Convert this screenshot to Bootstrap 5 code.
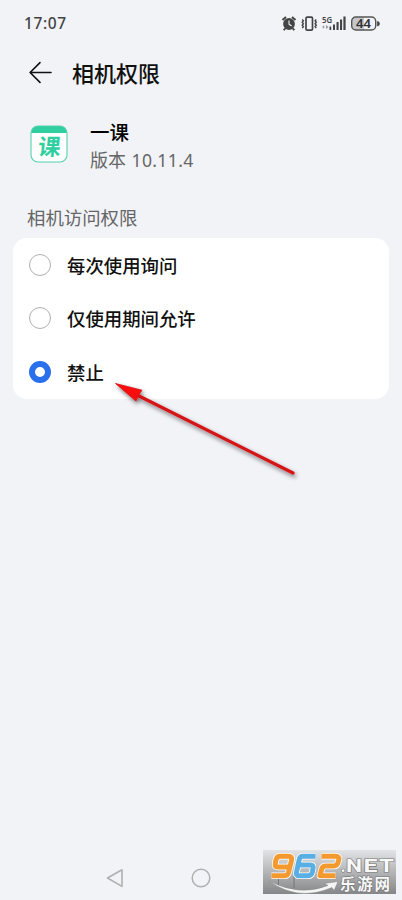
<!DOCTYPE html>
<html lang="zh-CN">
<head>
<meta charset="utf-8">
<meta name="viewport" content="width=device-width, initial-scale=1">
<title>相机权限</title>
<link href="https://cdn.jsdelivr.net/npm/bootstrap@5.3.0/dist/css/bootstrap.min.css" rel="stylesheet">
<style>
body{background:#f1f3f7;font-family:Roboto,"Noto Sans CJK SC",sans-serif;color:#111}
.screen{width:402px;height:900px;overflow:hidden}
.statusbar{height:47px;padding:0 22px 0 24px;color:#444}
.clock{font-family:"Noto Sans",sans-serif;font-size:15.5px;font-weight:500;line-height:47px;letter-spacing:.6px}
.topbar{height:53px;padding-left:28px}
.topbar svg{margin-top:-3px}
.topbar h1{font-size:22px;font-weight:500;line-height:30px;margin:2px 0 0 20px}
.app{height:88px;padding-left:30px}
.app-text{margin-left:22px;padding-top:5px}
.app-name{font-size:19.5px;font-weight:500;line-height:27px;color:#000}
.app-ver{font-size:18px;line-height:27px;color:#666}
.app-num{font-family:"Noto Sans",sans-serif;font-size:17.6px;letter-spacing:.35px;margin-left:1px}
.section{height:50px;padding-left:27px;font-size:18.4px;line-height:27px;color:#666;padding-top:17px}
.options{margin:0 13px;border-radius:14px;width:376px;height:161px}
.option{height:53.66px;padding-left:16px;font-size:18.4px;font-weight:500;gap:16px}
.option-text{padding-top:3px}
.radio{width:22px;height:22px;border:1.3px solid #b0b0b0;border-radius:50%}
.radio.on{border:6px solid #2a6fec}
.navkeys{height:44px;padding-left:106px;gap:67px}
.pointer{left:0;top:0;pointer-events:none}
.stamp{left:263px;top:850px}
</style>
</head>
<body>
<main class="screen position-relative d-flex flex-column">
  <header class="statusbar d-flex justify-content-between align-items-center">
    <span class="clock">17:07</span>
    <svg width="100" height="24" viewBox="280 12 100 24">
      <g fill="#444">
        <circle cx="289" cy="24" r="5.900"/>
        <path d="M282.500 20L286 17M295.500 20L292 17M285 28.500L283.800 30.300M293 28.500L294.200 30.300" stroke="#444" stroke-width="2"/>
        <path d="M289 20.500V24.200L291.700 26" fill="none" stroke="#f1f3f7" stroke-width="1.100"/>
      </g>
      <g fill="none" stroke="#444">
        <rect x="306" y="17.200" width="6.500" height="13" rx="1.200" stroke-width="1.700"/>
        <path d="M302.200 19.500l1.200 1.300-1.200 1.500 1.200 1.500-1.200 1.500 1.200 1.500-1.200 1.300M316.300 19.500l-1.200 1.300 1.200 1.500-1.200 1.500 1.200 1.500-1.200 1.500 1.200 1.300" stroke-width="1.400"/>
      </g>
      <text x="322" y="23" font-family="Noto Sans, sans-serif" font-size="9.500" font-weight="600" fill="#444" textLength="10" lengthAdjust="spacingAndGlyphs">5G</text>
      <g fill="#444"><rect x="329.500" y="26.500" width="1.700" height="3.500"/><rect x="333" y="24.500" width="2" height="5.500"/><rect x="336.500" y="22" width="2.100" height="8"/><rect x="340" y="19.500" width="2.100" height="10.500"/><rect x="343.400" y="16.500" width="2.200" height="13.500"/></g>
      <path d="M322 27l2.200-1.800v3.600zM328.500 27l-2.500-2v4z" fill="#999"/>
      <rect x="351.700" y="17" width="24" height="13" rx="4.200" fill="#f1f3f7"/>
      <path d="M364 17h-8.100a4.200 4.200 0 0 0-4.200 4.200v4.600a4.200 4.200 0 0 0 4.200 4.200h8.100z" fill="#c5c7ca"/>
      <rect x="351.700" y="17" width="24" height="13" rx="4.200" fill="none" stroke="#555" stroke-width="1.400"/>
      <path d="M377.300 21.500a2 2 0 0 1 0 4.500z" fill="#444" stroke="#444" stroke-width=".6"/>
      <text x="356" y="28" font-family="Noto Sans, sans-serif" font-size="12.500" font-weight="600" fill="#333" textLength="15" lengthAdjust="spacingAndGlyphs">44</text>
    </svg>
  </header>

  <div class="topbar d-flex align-items-center">
    <svg width="24" height="24" viewBox="28 60 24 24" fill="none" stroke="#111" stroke-width="1.6" stroke-linecap="round" stroke-linejoin="round"><path d="M51 72.500H30.300M40 62.600L30.100 72.500L40 82.400"/></svg>
    <h1>相机权限</h1>
  </div>

  <section class="app d-flex align-items-center">
    <svg width="38" height="38" viewBox="0 0 38 38">
      <rect x="1" y="1" width="36" height="36" rx="7" fill="#fff"/>
      <path d="M1 8a7 7 0 0 1 7-7h22a7 7 0 0 1 7 7z" fill="#2fcf9f"/>
      <rect x="1" y="1" width="36" height="36" rx="7" fill="none" stroke="#55d1ad" stroke-width="1.100"/>
      <text x="19" y="30" text-anchor="middle" font-size="22.500" font-weight="700" fill="#2fcf9f" transform="translate(2.300 0) skewX(-5)">课</text>
    </svg>
    <div class="app-text d-flex flex-column">
      <span class="app-name">一课</span>
      <span class="app-ver">版本 <span class="app-num">10.11.4</span></span>
    </div>
  </section>

  <div class="section">相机访问权限</div>

  <div class="options bg-white d-flex flex-column">
    <div class="option d-flex align-items-center"><span class="radio"></span><span class="option-text">每次使用询问</span></div>
    <div class="option d-flex align-items-center"><span class="radio"></span><span class="option-text">仅使用期间允许</span></div>
    <div class="option d-flex align-items-center"><span class="radio on"></span><span class="option-text">禁止</span></div>
  </div>

  <nav class="navkeys d-flex align-items-center mt-auto">
    <svg width="18" height="20" viewBox="106 868 18 20" fill="none" stroke="#b0b0b0" stroke-width="1.600" stroke-linejoin="round"><path d="M107.500 878L122 869.800V886.400Z"/></svg>
    <svg width="20" height="20" viewBox="0 0 20 20" fill="none" stroke="#b0b0b0" stroke-width="1.500"><circle cx="10" cy="10" r="8.800"/></svg>
  </nav>

  <svg class="pointer position-absolute" width="402" height="500">
    <defs><filter id="soft" x="-10%" y="-10%" width="125%" height="125%"><feDropShadow dx="1.500" dy="2.500" stdDeviation="2" flood-color="#000" flood-opacity=".55"/></filter></defs>
    <g filter="url(#soft)"><path d="M137 395L293 473" stroke="#d51218" stroke-width="3.200" stroke-linecap="round"/><path d="M115.500 383.500L142 390.200L138.500 395L136 401Z" fill="#f90b0b" stroke="#d51218" stroke-width=".8"/></g>
  </svg>

  <svg class="stamp position-absolute" width="133" height="44" viewBox="263 850 133 44">
    <defs>
      <linearGradient id="steel" x1="0" y1="0" x2="0" y2="1"><stop offset="0" stop-color="#e2e3e4"/><stop offset=".5" stop-color="#b4b5b7"/><stop offset="1" stop-color="#858688"/></linearGradient>
      <path id="nine" d="M289 867H278Q274.500 867 275.300 863.500L276 859.800Q277 856.300 280 856.300H288.500Q292.500 856.300 291.500 860.300L288.500 872.500Q287.800 875.700 284.500 875.700H271.500"/>
      <path id="six" d="M315.500 856.300H303Q300 856.300 299.300 859.300L296.500 872.200Q295.500 875.700 299 875.700H308Q311.500 875.700 312.300 872.200L313 868.500Q313.700 865 310.500 865H299"/>
      <path id="two" d="M321.500 856.300H335.500Q339.500 856.300 338.700 859.800L338 862.500Q337.200 866 333.700 866H326Q322.500 866 321.700 869L320 875.700H335.500"/>
    </defs>
    <rect x="263" y="850" width="133" height="44" fill="url(#steel)"/>
    <path d="M278.500 876v10M294 876v12" stroke="#777" stroke-width="1"/>
    <path d="M269 881Q300 897 328 885.500L324.500 883.500L338 881.500L334 890.500L332 887.500Q298 902 269 881Z" fill="#f5f5f5" stroke="#888" stroke-width=".5"/>
    <g fill="none" stroke-linejoin="round">
      <g stroke="#fff" stroke-width="6.600"><use href="#nine"/><use href="#six"/><use href="#two"/></g>
      <g stroke-width="5"><use href="#nine" stroke="#f4992e"/><use href="#six" stroke="#59afe3"/><use href="#two" stroke="#f4992e"/></g>
    </g>
    <g fill="#f8f8f8" stroke="#777" stroke-width="1.200" paint-order="stroke" font-weight="700">
      <text x="340.500" y="872" font-size="18">.</text>
      <text x="346" y="872" font-size="18.500" textLength="16" lengthAdjust="spacingAndGlyphs">N</text>
      <text x="363.500" y="872" font-size="18.500" textLength="14" lengthAdjust="spacingAndGlyphs">E</text>
      <text x="379" y="872" font-size="18.500" textLength="15" lengthAdjust="spacingAndGlyphs">T</text>
      <text x="340" y="889.500" font-size="15.500" textLength="50">乐游网</text>
    </g>
  </svg>
</main>
<script src="https://cdn.jsdelivr.net/npm/bootstrap@5.3.0/dist/js/bootstrap.bundle.min.js"></script>
</body>
</html>
